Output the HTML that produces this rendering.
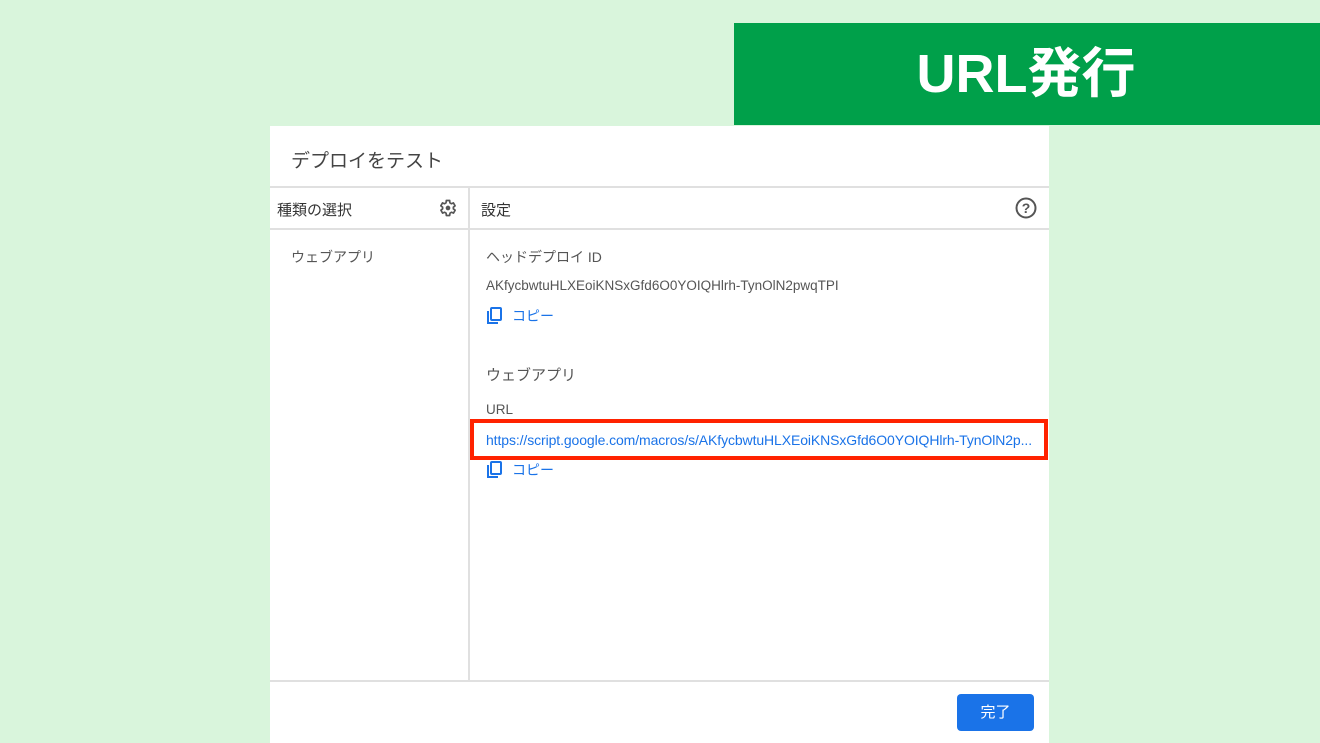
<!DOCTYPE html>
<html><head><meta charset="utf-8"><style>
body{margin:0;width:1320px;height:743px;background:#d9f5dc;position:relative;overflow:hidden;font-family:"Liberation Sans","Noto Sans CJK JP",sans-serif}
.a{position:absolute}
.banner{left:734px;top:23px;width:586px;height:102px;background:#00a04a;color:#fff;font-weight:bold;font-size:54px;line-height:102px;text-align:center;font-family:"Liberation Sans","Noto Sans CJK JP",sans-serif}
.dlg{left:270px;top:126px;width:779px;height:617px;background:#fff}
.hl{background:#e0e0e0;height:2px}
.t{color:#555;font-size:14px;white-space:nowrap}
.blue{color:#1a73e8}
</style></head><body>
<div class="a banner"><span style="position:relative;left:-1px">URL発行</span></div>
<div class="a dlg"></div>
<div class="a t" style="left:291px;top:146px;font-size:19px;color:#444">デプロイをテスト</div>
<div class="a hl" style="left:270px;top:186px;width:779px"></div>
<div class="a hl" style="left:270px;top:228px;width:779px"></div>
<div class="a hl" style="left:270px;top:680px;width:779px"></div>
<div class="a" style="left:468px;top:187px;width:2px;height:494px;background:#e0e0e0"></div>
<div class="a t" style="left:277px;top:199px;font-size:15px;color:#333">種類の選択</div>
<svg class="a" style="left:438px;top:198px" width="20" height="20" viewBox="0 0 24 24"><path fill="none" stroke="#555" stroke-width="2" stroke-linejoin="round" d="M19.4 13a7.5 7.5 0 0 0 0-2l2.1-1.6-2-3.5-2.5 1a7 7 0 0 0-1.7-1L15 3h-4l-.4 2.9a7 7 0 0 0-1.7 1l-2.5-1-2 3.5L6.6 11a7.5 7.5 0 0 0 0 2l-2.1 1.6 2 3.5 2.5-1a7 7 0 0 0 1.7 1L11 21h4l.4-2.9a7 7 0 0 0 1.7-1l2.5 1 2-3.5z" transform="translate(-1 0)"/><circle cx="12" cy="12" r="2.8" fill="#555"/></svg>
<div class="a t" style="left:481px;top:199px;font-size:15px;color:#333">設定</div>
<svg class="a" style="left:1015px;top:197px" width="22" height="22" viewBox="0 0 22 22"><circle cx="11" cy="11" r="9.5" fill="none" stroke="#555" stroke-width="2"/><text x="11" y="16" font-size="14" font-weight="bold" text-anchor="middle" fill="#555" font-family="Liberation Sans">?</text></svg>
<div class="a t" style="left:291px;top:247px">ウェブアプリ</div>
<div class="a t" style="left:486px;top:247px">ヘッドデプロイ ID</div>
<div class="a t" style="left:486px;top:278px;font-size:13.5px">AKfycbwtuHLXEoiKNSxGfd6O0YOIQHlrh-TynOlN2pwqTPI</div>
<svg class="a" style="left:486px;top:307px" width="16" height="18" viewBox="0 0 16 18"><rect x="5" y="1" width="10" height="12" rx="1" fill="none" stroke="#1a73e8" stroke-width="2"/><path d="M2 4v12h10" fill="none" stroke="#1a73e8" stroke-width="2"/></svg>
<div class="a t blue" style="left:512px;top:306px">コピー</div>
<div class="a t" style="left:486px;top:364px;font-size:15px">ウェブアプリ</div>
<div class="a t" style="left:486px;top:402px;font-size:13.5px">URL</div>
<div class="a" style="left:470px;top:419px;width:570px;height:33px;border:4px solid #ff2200"></div>
<div class="a t blue" style="left:486px;top:432px;font-size:14px;letter-spacing:-0.1px">https://script.google.com/macros/s/AKfycbwtuHLXEoiKNSxGfd6O0YOIQHlrh-TynOlN2p...</div>
<svg class="a" style="left:486px;top:461px" width="16" height="18" viewBox="0 0 16 18"><rect x="5" y="1" width="10" height="12" rx="1" fill="none" stroke="#1a73e8" stroke-width="2"/><path d="M2 4v12h10" fill="none" stroke="#1a73e8" stroke-width="2"/></svg>
<div class="a t blue" style="left:512px;top:460px">コピー</div>
<div class="a" style="left:957px;top:694px;width:77px;height:37px;background:#1a73e8;border-radius:4px;color:#fff;font-size:15px;line-height:37px;text-align:center">完了</div>
</body></html>
